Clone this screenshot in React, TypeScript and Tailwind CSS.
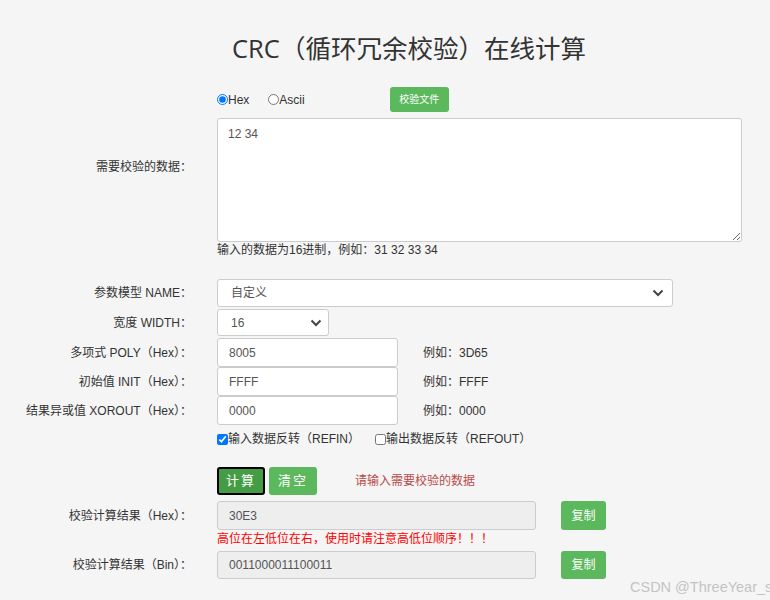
import { useState } from "react";

const font = { fontFamily: '"Liberation Sans", "Noto Sans CJK SC", sans-serif' };

function Row({ label, children, className = "" }: { label?: string; children: React.ReactNode; className?: string }) {
  return (
    <div className={`flex items-center ${className}`}>
      <div className="w-[192px] shrink-0 text-right text-[12px] text-[#333]">{label}</div>
      <div className="ml-[25px] flex items-center flex-1">{children}</div>
    </div>
  );
}

function Chevron() {
  return (
    <svg width="12" height="8" viewBox="0 0 12 8" className="text-[#444]">
      <path d="M1.5 1.5 L6 6 L10.5 1.5" fill="none" stroke="currentColor" strokeWidth="2" />
    </svg>
  );
}

export default function App() {
  const [data, setData] = useState("12 34");

  return (
    <div className="min-h-[600px] bg-[#f5f5f5] text-[#333] overflow-hidden relative" style={font}>
      <h1
        className="pt-[30px] h-[66px] pl-[48px] text-center text-[25.5px] leading-[36px] text-[#333]"
        style={{ fontFamily: '"Open Sans", "Noto Sans CJK SC", sans-serif' }}
      >
        CRC（循环冗余校验）在线计算
      </h1>

      <Row className="mt-[21px] h-[25px]">
        <label className="flex items-center text-[12px] text-[#333]">
          <input type="radio" name="fmt" defaultChecked className="m-0 w-[11px] h-[11px]" />
          Hex
        </label>
        <label className="flex items-center text-[12px] text-[#333] ml-[19px]">
          <input type="radio" name="fmt" className="m-0 w-[11px] h-[11px]" />
          Ascii
        </label>
        <button className="ml-[85px] h-[25px] w-[59px] rounded-[3px] bg-[#5cb85c] text-white text-[10px]">校验文件</button>
      </Row>

      <div className="flex mt-[6px]">
        <div className="w-[192px] shrink-0 text-right text-[12px] text-[#333] pt-[40px]">需要校验的数据：</div>
        <div className="ml-[25px]">
          <textarea
            value={data}
            onChange={(e) => setData(e.target.value)}
            className="block w-[525px] h-[124px] bg-white border border-[#ccc] rounded-[3px] px-[10px] py-[6px] text-[12px] text-[#555] outline-none"
          />
          <div className="text-[12px] text-[#333] leading-[16px]">输入的数据为16进制，例如：31 32 33 34</div>
        </div>
      </div>

      <Row label="参数模型 NAME：" className="mt-[21px]">
        <div className="w-[456px] h-[28px] bg-white border border-[#ccc] rounded-[3px] flex items-center justify-between pl-[13px] pr-[8px] text-[12px] text-[#555]">
          <span>自定义</span>
          <Chevron />
        </div>
      </Row>

      <Row label="宽度 WIDTH：" className="mt-[2px]">
        <div className="w-[112px] h-[27px] bg-white border border-[#ccc] rounded-[3px] flex items-center justify-between pl-[13px] pr-[6px] text-[12px] text-[#555]">
          <span>16</span>
          <Chevron />
        </div>
      </Row>

      {[
        ["多项式 POLY（Hex）：", "8005", "例如：3D65"],
        ["初始值 INIT（Hex）：", "FFFF", "例如：FFFF"],
        ["结果异或值 XOROUT（Hex）：", "0000", "例如：0000"],
      ].map(([l, v, e], i) => (
        <Row key={l} label={l} className={i === 0 ? "mt-[2px]" : ""}>
          <div className="w-[181px] h-[29px] bg-white border border-[#ccc] rounded-[3px] flex items-center px-[11px] text-[12px] text-[#555]">
            {v}
          </div>
          <span className="ml-[25px] text-[12px] text-[#333]">{e}</span>
        </Row>
      ))}

      <Row className="mt-[5px] h-[18px]">
        <label className="flex items-center text-[12px] text-[#333]">
          <input type="checkbox" defaultChecked className="m-0 w-[11px] h-[11px]" />
          输入数据反转（REFIN）
        </label>
        <label className="flex items-center text-[12px] text-[#333] ml-[15px]">
          <input type="checkbox" className="m-0 w-[11px] h-[11px]" />
          输出数据反转（REFOUT）
        </label>
      </Row>

      <Row className="mt-[19px]">
        <button className="w-[48px] h-[28px] rounded-[3px] bg-[#449d44] border-2 border-black text-white text-[13px] tracking-[2px]">计算</button>
        <button className="ml-[4px] w-[48px] h-[28px] rounded-[3px] bg-[#5cb85c] text-white text-[13px] tracking-[2px]">清空</button>
        <span className="ml-[38px] text-[12px] text-[#b94a48]">请输入需要校验的数据</span>
      </Row>

      <Row label="校验计算结果（Hex）：" className="mt-[6px]">
        <div className="w-[319px] h-[29px] bg-[#eee] border border-[#ccc] rounded-[3px] flex items-center px-[11px] text-[12px] text-[#555]">30E3</div>
        <button className="ml-[25px] w-[45px] h-[29px] rounded-[3px] bg-[#5cb85c] text-white text-[12px]">复制</button>
      </Row>
      <div className="ml-[217px] mt-[1px] text-[12px] leading-[16px] text-[#f00]">高位在左低位在右，使用时请注意高低位顺序！！！</div>

      <Row label="校验计算结果（Bin）：" className="mt-[4px]">
        <div className="w-[319px] h-[28px] bg-[#eee] border border-[#ccc] rounded-[3px] flex items-center px-[11px] text-[12px] text-[#555]">0011000011100011</div>
        <button className="ml-[25px] w-[45px] h-[28px] rounded-[3px] bg-[#5cb85c] text-white text-[12px]">复制</button>
      </Row>

      <div className="absolute left-[630px] top-[577px] text-[14.5px] text-[#c4c4c4] whitespace-nowrap">CSDN @ThreeYear_s</div>
    </div>
  );
}
